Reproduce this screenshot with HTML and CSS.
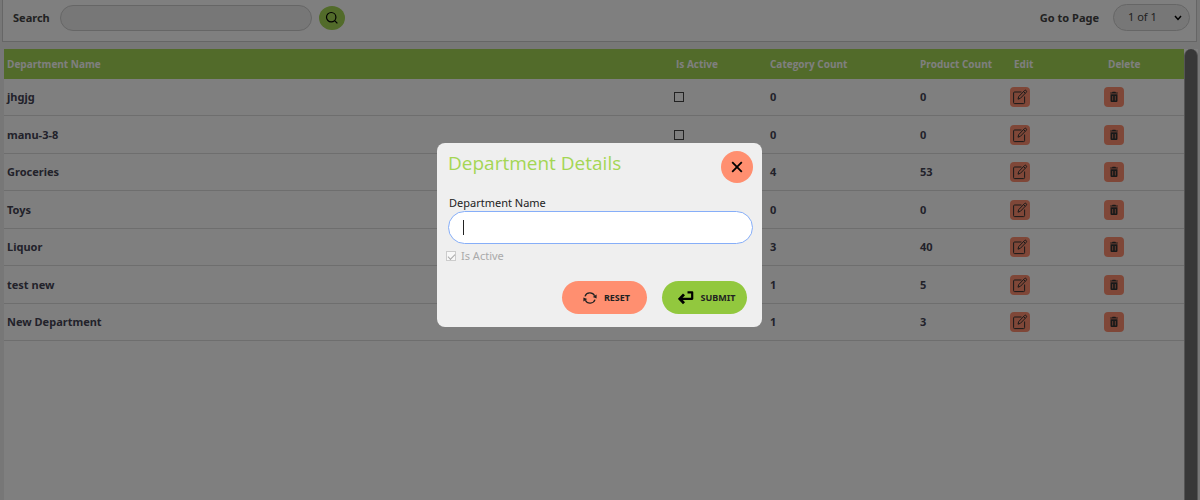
FILE: index.html
```html
<!DOCTYPE html>
<html lang="en">
<head>
<meta charset="utf-8">
<title>Departments</title>
<link rel="stylesheet" href="styles.css">
</head>
<body>
<svg class="sprite" aria-hidden="true">
  <symbol id="edit" viewBox="0 0 16 16">
    <path d="M9.5 3H2.6Q1.6 3 1.6 4V13.6Q1.6 14.6 2.6 14.6H11.6Q12.6 14.6 12.6 13.6V7.5M6 10.2L6.7 7.6L12.6 1.5Q13.4.8 14.2 1.6Q15 2.4 14.3 3.2L8.4 9.3ZM11.6 2.6L13.3 4.3" fill="none" stroke="currentColor" stroke-width="1" stroke-linejoin="round"/>
  </symbol>
  <symbol id="trash" viewBox="0 0 10 12">
    <path fill-rule="evenodd" fill="currentColor" d="M3 1.4L3.6.7H6.4L7 1.4H8.8V2.6H1.2V1.4ZM1.5 3.2H8.5V9.8Q8.5 11 7.4 11H2.6Q1.5 11 1.5 9.8ZM3.4 5V9.4H4.1V5ZM5.9 5V9.4H6.6V5Z"/>
  </symbol>
</svg>
<header class="toolbar">
  <label class="toolbar-label" for="search">Search</label>
  <input class="search-input" id="search" type="text">
  <button class="search-button" type="button" aria-label="Search">
    <svg viewBox="0 0 14 14" width="14" height="14"><g fill="none" stroke="#000" stroke-width="1.2"><circle cx="6.2" cy="6.2" r="4.7"/><path d="M9.6 9.6L12.4 12.4"/></g></svg>
  </button>
  <label class="toolbar-label page-label" for="page">Go to Page</label>
  <span class="select-wrap">
    <select class="page-select" id="page"><option>1 of 1</option></select>
    <svg class="select-arrow" viewBox="0 0 8 6" width="8" height="6"><path d="M1 1L4 4.4L7 1" fill="none" stroke="#000" stroke-width="1.5"/></svg>
  </span>
</header>
<main class="list">
  <table class="departments">
    <colgroup><col><col class="col-active"><col class="col-category"><col class="col-product"><col class="col-edit"><col class="col-delete"></colgroup>
    <thead>
      <tr><th>Department Name</th><th class="head-active">Is Active</th><th>Category Count</th><th>Product Count</th><th class="head-edit">Edit</th><th class="head-delete">Delete</th></tr>
    </thead>
    <tbody>
      <tr><td>jhgjg</td><td><input class="check" type="checkbox" aria-label="jhgjg active"></td><td>0</td><td>0</td><td><button class="action" type="button" aria-label="Edit"><svg width="16" height="16"><use href="#edit"/></svg></button></td><td><button class="action" type="button" aria-label="Delete"><svg width="10" height="12"><use href="#trash"/></svg></button></td></tr>
      <tr><td>manu-3-8</td><td><input class="check" type="checkbox" aria-label="manu-3-8 active"></td><td>0</td><td>0</td><td><button class="action" type="button" aria-label="Edit"><svg width="16" height="16"><use href="#edit"/></svg></button></td><td><button class="action" type="button" aria-label="Delete"><svg width="10" height="12"><use href="#trash"/></svg></button></td></tr>
      <tr><td>Groceries</td><td><input class="check" type="checkbox" aria-label="Groceries active"></td><td>4</td><td>53</td><td><button class="action" type="button" aria-label="Edit"><svg width="16" height="16"><use href="#edit"/></svg></button></td><td><button class="action" type="button" aria-label="Delete"><svg width="10" height="12"><use href="#trash"/></svg></button></td></tr>
      <tr><td>Toys</td><td><input class="check" type="checkbox" aria-label="Toys active"></td><td>0</td><td>0</td><td><button class="action" type="button" aria-label="Edit"><svg width="16" height="16"><use href="#edit"/></svg></button></td><td><button class="action" type="button" aria-label="Delete"><svg width="10" height="12"><use href="#trash"/></svg></button></td></tr>
      <tr><td>Liquor</td><td><input class="check" type="checkbox" aria-label="Liquor active"></td><td>3</td><td>40</td><td><button class="action" type="button" aria-label="Edit"><svg width="16" height="16"><use href="#edit"/></svg></button></td><td><button class="action" type="button" aria-label="Delete"><svg width="10" height="12"><use href="#trash"/></svg></button></td></tr>
      <tr><td>test new</td><td><input class="check" type="checkbox" aria-label="test new active"></td><td>1</td><td>5</td><td><button class="action" type="button" aria-label="Edit"><svg width="16" height="16"><use href="#edit"/></svg></button></td><td><button class="action" type="button" aria-label="Delete"><svg width="10" height="12"><use href="#trash"/></svg></button></td></tr>
      <tr><td>New Department</td><td><input class="check" type="checkbox" aria-label="New Department active"></td><td>1</td><td>3</td><td><button class="action" type="button" aria-label="Edit"><svg width="16" height="16"><use href="#edit"/></svg></button></td><td><button class="action" type="button" aria-label="Delete"><svg width="10" height="12"><use href="#trash"/></svg></button></td></tr>
    </tbody>
  </table>
  <div class="scroll-track"></div>
</main>
<div class="backdrop">
  <form class="dialog" role="dialog" aria-labelledby="dialog-title">
    <div class="dialog-head">
      <h1 class="dialog-title" id="dialog-title">Department Details</h1>
      <button class="close" type="button" aria-label="Close"><svg viewBox="0 0 12 12" width="12" height="12"><path d="M1.2 1.2L10.8 10.8M10.8 1.2L1.2 10.8" stroke="#000" stroke-width="1.8"/></svg></button>
    </div>
    <label class="field-label" for="name">Department Name</label>
    <div class="field"><input class="name-input" id="name" type="text"><span class="caret"></span></div>
    <label class="active-row"><input class="check-disabled" type="checkbox" checked disabled>Is Active</label>
    <div class="dialog-actions">
      <button class="pill reset" type="reset">
        <svg viewBox="0 0 14 14" width="14" height="14"><path d="M2 5.4A5.2 5.2 0 0 1 11.6 4.8M12 8.6A5.2 5.2 0 0 1 2.4 9.2" fill="none" stroke="#222" stroke-width="1.3"/><path d="M13.6 3.6V7.4L9.8 6ZM.4 10.4V6.6L4.2 8Z" fill="#222"/></svg>
        RESET
      </button>
      <button class="pill submit" type="submit">
        <svg viewBox="0 0 16 14" width="16" height="14"><path d="M9.5 1.3H14.2V7.8H2" fill="none" stroke="#000" stroke-width="2.2" stroke-linejoin="round"/><path d="M6 3.4L1.8 7.8L6 12.2" fill="none" stroke="#000" stroke-width="2.8"/></svg>
        SUBMIT
      </button>
    </div>
  </form>
</div>
</body>
</html>
```
FILE: styles.css
```css
* { box-sizing: border-box; }
body {
  margin: 0;
  height: 100vh;
  display: flex;
  flex-direction: column;
  overflow: hidden;
  background: #eee;
  color: #445;
  font: 11px/16px "Noto Sans", "Open Sans", sans-serif;
}
button, input, select { font: inherit; margin: 0; padding: 0; }
button { display: inline-flex; align-items: center; justify-content: center; border: 0; }
svg { display: block; flex: none; }
.sprite { position: absolute; width: 0; height: 0; }

.toolbar {
  display: flex;
  align-items: center;
  margin: 0 3px 0 2px;
  padding: 4px 6px 10px 10px;
  background: #fff;
  border: 1px solid #ccc;
  border-width: 0 1px 1px;
}
.toolbar-label { font-weight: 700; color: #444; }
.search-input {
  width: 252px;
  height: 26px;
  margin: 0 7px 0 10px;
  padding: 0 12px;
  background: #eee;
  border: 1px solid #ccc;
  border-radius: 13px;
}
.search-button { width: 26px; height: 24px; border-radius: 50%; background: #a4d654; }
.page-label { margin-left: auto; }
.select-wrap { position: relative; margin-left: 14px; }
.page-select {
  display: block;
  appearance: none;
  width: 77px;
  height: 27px;
  padding: 0 14px 2px;
  color: #444;
  background: #eee;
  border: 1px solid #ccc;
  border-radius: 14px;
}
.select-arrow { position: absolute; right: 8px; top: 11px; pointer-events: none; }

.list { flex: 1; display: flex; align-items: flex-start; margin: 7px 2px 0 4px; background: #fff; }
.departments { flex: 1; table-layout: fixed; border-collapse: separate; border-spacing: 0; font-weight: 700; }
.col-active { width: 97px; }
.col-category { width: 150px; }
.col-product { width: 90px; }
.col-edit { width: 94px; }
.col-delete { width: 83px; }
th, td { padding: 0 3px; text-align: left; white-space: nowrap; }
th { height: 30px; background: #a4d654; color: #fff; font-family: "Open Sans", sans-serif; font-size: 10px; }
.head-active { padding-left: 6px; }
.head-edit, .head-delete { padding-left: 7px; }
td { height: 37px; border-bottom: 1px solid #ddd; }
tr:nth-child(even) td { height: 38px; }
.action { display: flex; width: 20px; height: 20px; border-radius: 4px; background: #ff8f70; color: #333; }
.check {
  display: block;
  appearance: none;
  width: 10px;
  height: 10px;
  margin-left: 1px;
  border: 1px solid #444;
}
.scroll-track { align-self: stretch; width: 14px; background: #707070; border: 1px solid #aaa; border-width: 0 1px; border-radius: 7px 7px 0 0; }

.backdrop {
  position: fixed;
  inset: 0;
  display: flex;
  align-items: flex-start;
  justify-content: center;
  padding: 143px 1px 0 0;
  background: rgba(0, 0, 0, .5);
}
.dialog {
  width: 325px;
  padding: 8px 9px 13px 11px;
  background: #efefef;
  border-radius: 8px;
  color: #222;
}
.dialog-head { display: flex; justify-content: space-between; }
.dialog-title { margin: 0; font-family: "Open Sans", sans-serif; font-size: 19px; line-height: 25px; font-weight: 400; color: #a4d654; }
.close { width: 32px; height: 32px; border-radius: 50%; background: #ff8f70; }
.field-label { display: block; margin: 12px 1px 0; }
.field { position: relative; }
.name-input {
  display: block;
  width: 100%;
  height: 33px;
  padding: 0 15px;
  background: #fff;
  border: 1px solid #86aef8;
  border-radius: 17px;
}
.caret { position: absolute; left: 15px; top: 9px; width: 1px; height: 15px; background: #222; }
.active-row { display: flex; align-items: center; gap: 5px; margin: 4px 0 0 -1px; color: #aaa; }
.check-disabled {
  appearance: none;
  width: 10px;
  height: 10px;
  margin-left: -1px;
  border: 1px solid #ccc;
  background: #f8f8f8;
  display: flex;
  align-items: center;
  justify-content: center;
}
.check-disabled::before {
  content: "";
  width: 6px;
  height: 3px;
  border: 1px solid #aaa;
  border-width: 0 0 1px 1px;
  transform: rotate(-45deg);
}
.dialog-actions { display: flex; justify-content: flex-end; gap: 15px; margin: 17px 6px 0; }
.pill { width: 85px; height: 33px; padding-left: 4px; gap: 7px; border-radius: 17px; font-size: 9px; font-weight: 700; color: #222; }
.reset { background: #ff8f70; }
.submit { background: #92c83e; }
```
